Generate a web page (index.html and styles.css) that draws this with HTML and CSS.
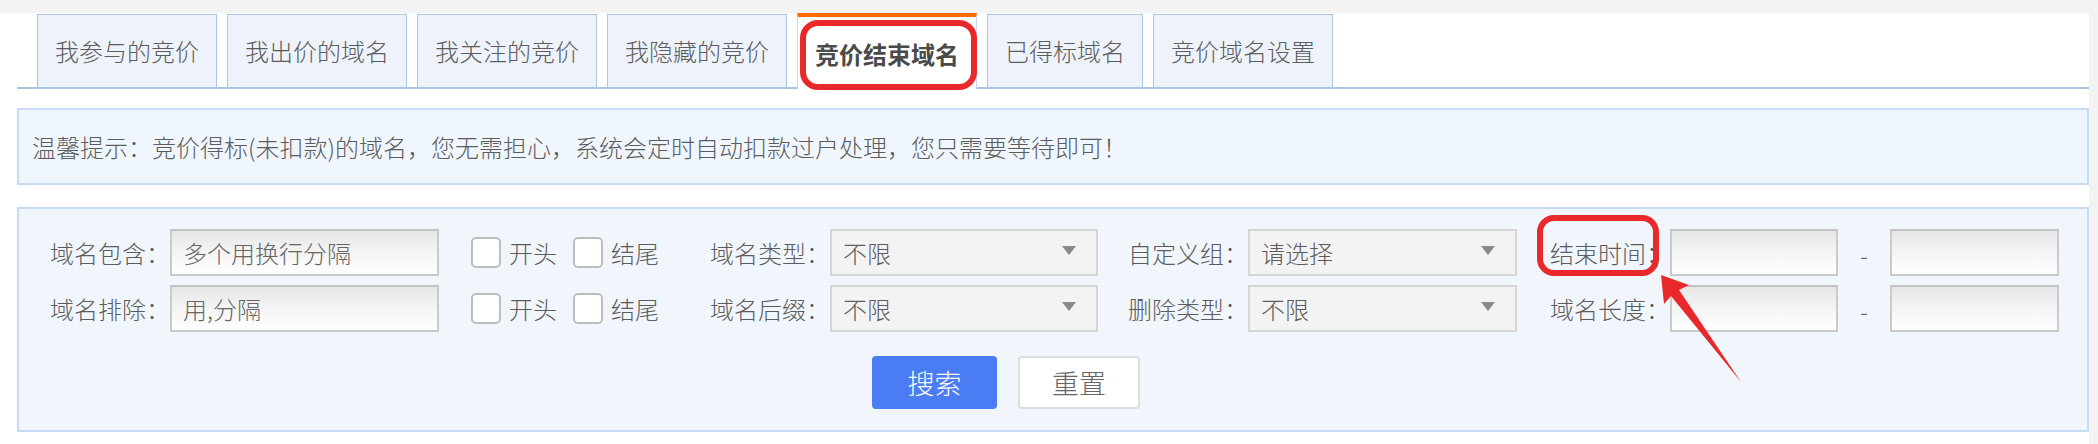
FILE: index.html
```html
<!DOCTYPE html>
<html lang="zh-CN">
<head>
<meta charset="utf-8">
<title>竞价结束域名</title>
<link rel="stylesheet" href="styles.css">
</head>
<body>
<div class="panel">
  <ul class="tabs">
    <li class="tab">我参与的竞价</li>
    <li class="tab">我出价的域名</li>
    <li class="tab">我关注的竞价</li>
    <li class="tab">我隐藏的竞价</li>
    <li class="tab active">竞价结束域名</li>
    <li class="tab">已得标域名</li>
    <li class="tab">竞价域名设置</li>
  </ul>

  <div class="notice">温馨提示：竞价得标(未扣款)的域名，您无需担心，系统会定时自动扣款过户处理，您只需要等待即可！</div>

  <form class="search">
    <div class="grid">
      <label class="lbl">域名包含：</label>
      <input class="txt" type="text" placeholder="多个用换行分隔">
      <div class="checks">
        <input class="cb" type="checkbox"><span class="cbt">开头</span>
        <input class="cb" type="checkbox"><span class="cbt">结尾</span>
      </div>
      <label class="lbl">域名类型：</label>
      <div class="sel"><span>不限</span><i class="tri"></i></div>
      <label class="lbl">自定义组：</label>
      <div class="sel"><span>请选择</span><i class="tri"></i></div>
      <label class="lbl">结束时间：</label>
      <input class="txt" type="text">
      <span class="dash">-</span>
      <input class="txt" type="text">

      <label class="lbl">域名排除：</label>
      <input class="txt" type="text" placeholder="用,分隔">
      <div class="checks">
        <input class="cb" type="checkbox"><span class="cbt">开头</span>
        <input class="cb" type="checkbox"><span class="cbt">结尾</span>
      </div>
      <label class="lbl">域名后缀：</label>
      <div class="sel"><span>不限</span><i class="tri"></i></div>
      <label class="lbl">删除类型：</label>
      <div class="sel"><span>不限</span><i class="tri"></i></div>
      <label class="lbl">域名长度：</label>
      <input class="txt" type="text">
      <span class="dash">-</span>
      <input class="txt" type="text">
    </div>
    <div class="btns">
      <button type="button" class="btn primary">搜索</button>
      <button type="button" class="btn plain">重置</button>
    </div>
  </form>
</div>

<svg class="marks" width="2098" height="444" viewBox="0 0 2098 444">
  <rect x="803" y="23" width="171" height="64" rx="15" ry="15" fill="none" stroke="#e8282b" stroke-width="6"/>
  <rect x="1540" y="218" width="116" height="55" rx="14" ry="14" fill="none" stroke="#e8282b" stroke-width="6"/>
  <polygon points="1661,275 1689,285 1679,290 1741,382 1671,296 1664,304" fill="#e8282b"/>
</svg>
</body>
</html>
```

FILE: styles.css
```css
* { box-sizing: border-box; }

html, body {
  margin: 0;
  padding: 0;
}

body {
  width: 2098px;
  height: 444px;
  overflow: hidden;
  background: #f3f3f3;
  font-family: "Noto Sans CJK SC", "Noto Sans", sans-serif;
  font-weight: 300;
  color: #5c5c5c;
  position: relative;
}

.panel {
  margin-top: 13px;
  width: 2089px;
  height: 431px;
  background: #fff;
  padding-left: 17px;
}

/* tabs */
.tabs {
  list-style: none;
  margin: 0;
  padding: 0 0 0 20px;
  height: 76px;
  display: flex;
  align-items: flex-end;
  gap: 10px;
  border-bottom: 2px solid #abc4e2;
}

.tab {
  height: 73px;
  padding: 0 17px;
  border: 1px solid #abc4e2;
  border-bottom: none;
  background: #eef3fb;
  font-size: 24px;
  line-height: 1;
  display: flex;
  align-items: center;
  color: #5c5c5c;
}

.tab.active {
  height: 76px;
  margin-bottom: -2px;
  border-top: 4px solid #ff6a00;
  border-left: 1px solid #c9d9ee;
  border-right: 1px solid #c9d9ee;
  background: #fff;
  font-weight: bold;
  color: #4a4a4a;
  padding-top: 2px;
}

/* notice */
.notice {
  margin-top: 19px;
  height: 77px;
  border: 2px solid #c7dcf2;
  background: #f0f6fe;
  padding-left: 13px;
  display: flex;
  align-items: center;
  font-size: 24px;
}

/* search form */
.search {
  margin: 22px 0 0;
  height: 225px;
  border: 2px solid #c7dcf2;
  background: #f1f6fd;
  padding: 20px 0 0 31px;
}

.grid {
  display: grid;
  grid-template-columns: 120px 269px 271px 120px 268px 150px 269px 153px 168px 52px 169px;
  grid-auto-rows: 47px;
  row-gap: 9px;
  align-items: center;
}

.lbl {
  font-size: 24px;
  line-height: 1;
  text-align: right;
  white-space: nowrap;
}

.txt {
  height: 47px;
  width: 100%;
  margin: 0;
  border: 2px solid #cacaca;
  border-top-color: #c2c2c2;
  background: linear-gradient(#e6e6e6, #f6f6f6 55%, #fff);
  font-family: inherit;
  font-weight: 300;
  font-size: 24px;
  color: #5c5c5c;
  padding: 0 11px;
  outline: none;
}

.txt::placeholder {
  color: #666;
}

.checks {
  display: flex;
  align-items: center;
  padding-left: 32px;
}

.cb {
  appearance: none;
  -webkit-appearance: none;
  width: 30px;
  height: 31px;
  margin: 0;
  border: 2px solid #bdbdbd;
  border-radius: 5px;
  background: #fff;
}

.cbt {
  font-size: 24px;
  line-height: 1;
  margin: 0 16px 0 8px;
}

.sel {
  position: relative;
  height: 47px;
  border: 2px solid #d6d6d6;
  background: #f3f3f3;
  font-size: 24px;
  display: flex;
  align-items: center;
  padding-left: 11px;
}

.tri {
  position: absolute;
  right: 20px;
  top: 15px;
  width: 0;
  height: 0;
  border-left: 7px solid transparent;
  border-right: 7px solid transparent;
  border-top: 9px solid #8a8a8a;
}

.dash {
  font-size: 24px;
  text-align: center;
  color: #666;
  padding-top: 4px;
}

.btns {
  display: flex;
  gap: 21px;
  margin-top: 24px;
  padding-left: 822px;
}

.btn {
  height: 53px;
  margin: 0;
  font-family: inherit;
  font-weight: 300;
  font-size: 27px;
  border-radius: 4px;
}

.btn.primary {
  width: 125px;
  background: #4a7cf3;
  border: none;
  color: #fff;
}

.btn.plain {
  width: 122px;
  background: #fff;
  border: 2px solid #dedede;
  color: #666;
}

.marks {
  position: absolute;
  left: 0;
  top: 0;
  pointer-events: none;
}
```
